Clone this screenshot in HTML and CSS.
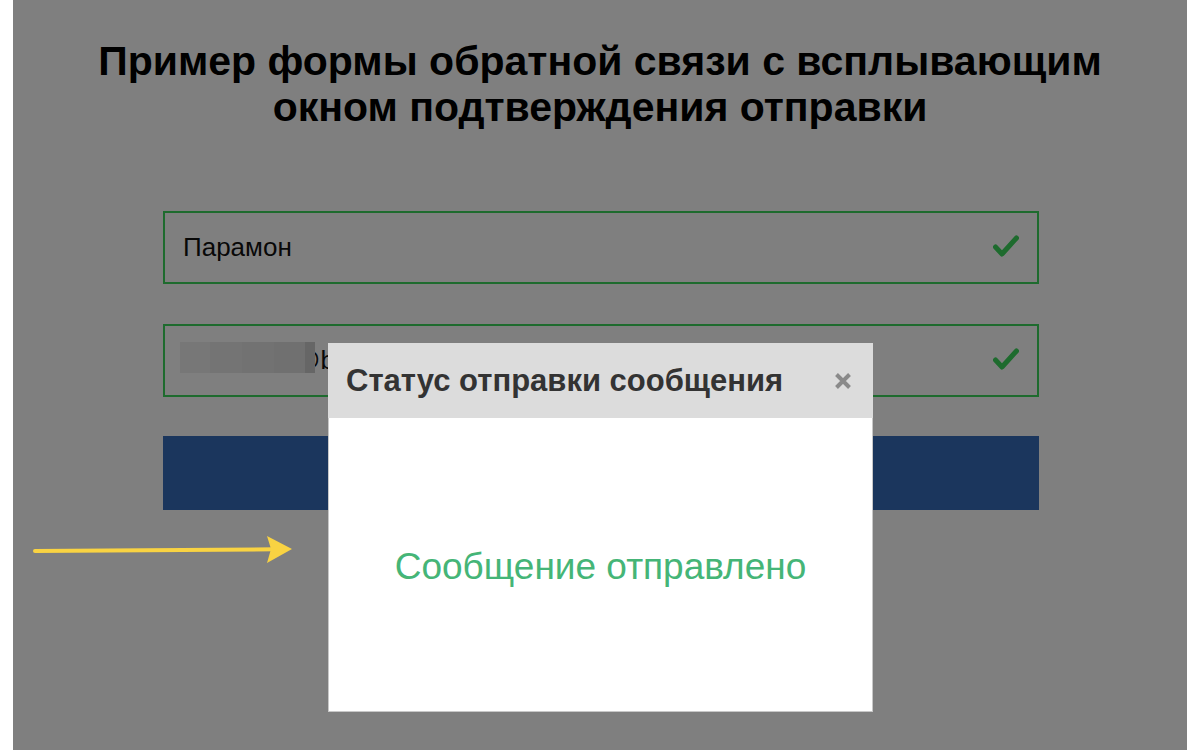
FILE: index.html
```html
<!DOCTYPE html>
<html lang="ru">
<head>
<meta charset="utf-8">
<title>Форма обратной связи</title>
<link rel="stylesheet" href="styles.css">
</head>
<body>
<div class="page">
  <h1 class="title">Пример формы обратной связи с всплывающим<br>окном подтверждения отправки</h1>
  <form class="form">
    <div class="field">
      <span class="field-value">Парамон</span>
      <svg class="check" width="26" height="23" viewBox="0 0 26 23"><polyline points="2.5,12 9,19 23.5,3" fill="none" stroke="#3cd65c" stroke-width="5" stroke-linecap="round" stroke-linejoin="round"/></svg>
    </div>
    <div class="field">
      <span class="field-value"><span class="redact"><i class="r1"></i><i class="r2"></i><i class="r3"></i><i class="r4"></i><i class="r5"></i></span>@bk.ru</span>
      <svg class="check" width="26" height="23" viewBox="0 0 26 23"><polyline points="2.5,12 9,19 23.5,3" fill="none" stroke="#3cd65c" stroke-width="5" stroke-linecap="round" stroke-linejoin="round"/></svg>
    </div>
    <button class="submit" type="button">Отправить</button>
  </form>
  <div class="overlay"></div>
  <svg class="arrow" width="300" height="40" viewBox="0 0 300 40"><line x1="22" y1="21" x2="262" y2="19.3" stroke="#f9d342" stroke-width="4" stroke-linecap="round"/><polygon points="254,6 279,19 254,33 258,19" fill="#f9d342"/></svg>
  <div class="modal">
    <div class="modal-head">
      <span class="modal-title">Статус отправки сообщения</span>
      <svg class="close" width="18" height="18" viewBox="0 0 18 18"><path d="M2.5 2.5 L15.5 15.5 M15.5 2.5 L2.5 15.5" stroke="#8a8a8a" stroke-width="4" stroke-linecap="butt"/></svg>
    </div>
    <div class="modal-body">
      <span class="modal-msg">Сообщение отправлено</span>
    </div>
  </div>
</div>
</body>
</html>
```

FILE: styles.css
```css
html, body {
  margin: 0;
  padding: 0;
  background: #ffffff;
}

body {
  font-family: "Liberation Sans", Arial, sans-serif;
}

.page {
  position: relative;
  margin-left: 13px;
  width: 1174px;
  height: 750px;
  overflow: hidden;
  background: #ffffff;
}

.title {
  margin: 0;
  padding-top: 38px;
  font-size: 41px;
  line-height: 46px;
  font-weight: bold;
  text-align: center;
  color: #000;
}

.form {
  width: 876px;
  margin: 81px 0 0 150px;
  display: flex;
  flex-direction: column;
}

.field {
  box-sizing: border-box;
  height: 73px;
  border: 2px solid #3cd65c;
  display: flex;
  align-items: center;
  justify-content: space-between;
  padding: 0 18px 0 18px;
  margin-bottom: 40px;
}

.field + .field {
  margin-bottom: 39px;
}

.field-value {
  font-size: 26px;
  color: #111;
  display: flex;
  align-items: center;
}

.redact {
  display: flex;
  height: 31px;
  margin-left: -3px;
  margin-right: -21px;
  margin-top: -6px;
  position: relative;
}

.redact i {
  display: block;
  height: 31px;
}

.redact .r1 { width: 30px; background: #eeeeee; }
.redact .r2 { width: 32px; background: #e9e9e9; }
.redact .r3 { width: 32px; background: #e4e4e4; }
.redact .r4 { width: 31px; background: #e0e0e0; }
.redact .r5 { width: 10px; background: #cccccc; }

.check {
  display: block;
  margin-top: -2px;
}

.submit {
  height: 74px;
  border: none;
  background: #366cba;
  color: #fff;
  font-family: "Liberation Sans", Arial, sans-serif;
  font-size: 24px;
}

.overlay {
  position: absolute;
  inset: 0;
  background: rgba(0, 0, 0, 0.5);
}

.arrow {
  position: absolute;
  left: 0;
  top: 530px;
}

.modal {
  position: absolute;
  left: 315px;
  top: 343px;
  width: 545px;
  height: 369px;
  box-sizing: border-box;
  background: #ffffff;
  border: 1px solid #c8c8c8;
  border-top: none;
  display: flex;
  flex-direction: column;
}

.modal-head {
  height: 75px;
  margin: 0 -1px;
  background: #dcdcdc;
  display: flex;
  align-items: center;
  justify-content: space-between;
  padding: 0 21px 0 18px;
}

.modal-title {
  font-size: 31px;
  font-weight: bold;
  color: #333;
}

.close {
  display: block;
}

.modal-body {
  flex: 1;
  display: flex;
  align-items: center;
  justify-content: center;
  padding-top: 4px;
}

.modal-msg {
  font-size: 37px;
  color: #45b577;
}
```
